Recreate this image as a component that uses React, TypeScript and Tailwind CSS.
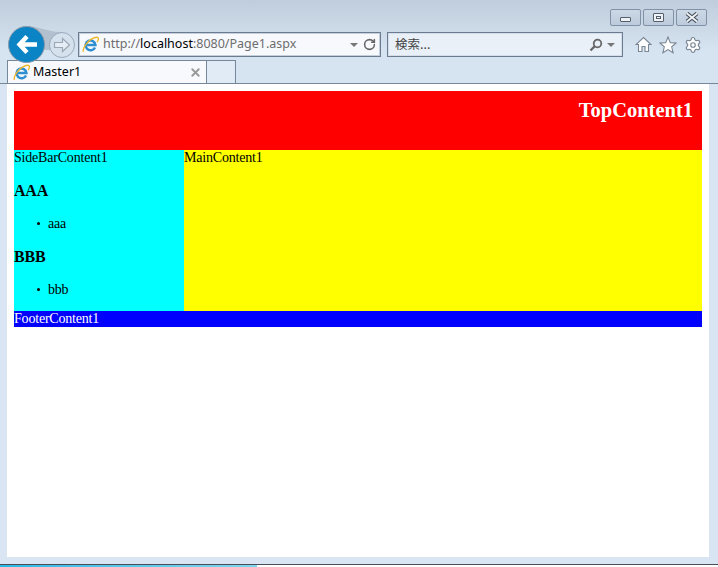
import React from 'react';
import { RotateCw, Settings, X } from 'lucide-react';

function IeLogo({ size = 17 }: { size?: number }) {
  return (
    <svg width={size} height={size} viewBox="0 0 17 17" className="shrink-0">
      <path d="M13 11.4A4.9 4.9 0 1 1 13.4 8.9H4.6" fill="none" stroke="#2f8fd0" strokeWidth="2.5" />
      <path d="M1.6 15.8C-.2 13.6 4.6 6 9 3.4c3-1.8 6-2.6 7-1.6.7.8.2 2.6-.9 4.3" fill="none" stroke="#eeb62a" strokeWidth="1.4" />
    </svg>
  );
}

function WindowButton({ children }: { children: React.ReactNode }) {
  return (
    <div className="w-[31px] h-[17px] flex items-center justify-center rounded-[2px] border border-[#8191a8] bg-gradient-to-b from-[#ccd8e5] to-[#bccbdc]">
      {children}
    </div>
  );
}

function Bullet({ label }: { label: string }) {
  return (
    <li className="flex items-center pl-[23px]">
      <span className="w-[3px] h-[3px] rounded-full bg-black mr-[8px] -mt-[1px]" />
      {label}
    </li>
  );
}

export default function App() {
  return (
    <div className="relative w-[718px] h-[567px] overflow-hidden flex flex-col bg-[#d9e5f2] font-['Noto_Sans',sans-serif]">
      {/* Browser chrome */}
      <div className="h-[84px] flex flex-col bg-gradient-to-b from-[#bfcddc] to-[#d6e4f1] to-60%">
        <div className="h-[32px] flex justify-end gap-[2px] pt-[9px] pr-[11px]">
          <WindowButton>
            <div className="w-[11px] h-[5px] mt-[3px] border border-[#555f6c] bg-[#eef2f6] rounded-[1px]" />
          </WindowButton>
          <WindowButton>
            <div className="w-[11px] h-[9px] flex items-center justify-center border border-[#555f6c] bg-[#eef2f6] rounded-[1px]">
              <div className="w-[5px] h-[3px] border border-[#555f6c]" />
            </div>
          </WindowButton>
          <WindowButton>
            <svg width="14" height="11" viewBox="0 0 14 11">
              <path d="M2 1.5 12 9.5M12 1.5 2 9.5" stroke="#454e5a" strokeWidth="4" />
              <path d="M2 1.5 12 9.5M12 1.5 2 9.5" stroke="#f2f5f8" strokeWidth="1.8" />
            </svg>
          </WindowButton>
        </div>

        <div className="relative z-10 h-[28px] flex items-start pl-[8px]">
          <svg width="54" height="30" viewBox="0 0 54 30" className="absolute left-[19px] -top-[6px]">
            <path d="M6 0C20 0 28 6 42 6L42 24H6z" fill="#a9b7c6" opacity="0.75" />
          </svg>
          <div className="relative w-[37px] h-[37px] -mt-[6px] rounded-full bg-[#0a84c4] border border-[#8a98a8] flex items-center justify-center">
            <svg width="22" height="21" viewBox="0 0 22 21">
              <path d="M11 2.5 3.5 10.5 11 18.5M4 10.5H21" fill="none" stroke="#ffffff" strokeWidth="4.4" />
            </svg>
          </div>
          <div className="relative w-[26px] h-[26px] ml-[4px] rounded-full border border-[#9aa9ba] bg-[#d5e1ed] flex items-center justify-center">
            <svg width="18" height="16" viewBox="0 0 18 16">
              <path d="M9.5 1.5 16.5 8 9.5 14.5V10.5H1.5V5.5H9.5z" fill="#e6edf4" stroke="#9ca8b5" strokeWidth="1.2" />
            </svg>
          </div>
          <div className="w-[303px] h-[25px] ml-[3px] flex items-center border border-[#6b7c90] shadow-[inset_0_0_0_1px_#c5d0dc] bg-[#f7f9fd] pl-[3px] pr-[4px]">
            <IeLogo />
            <div className="ml-[4px] flex-1 text-[12.5px] leading-none text-[#6d6d6d]">
              http://<span className="text-black">localhost</span>:8080/Page1.aspx
            </div>
            <div className="w-0 h-0 mr-[5px] border-x-[4px] border-x-transparent border-t-[4px] border-t-[#777]" />
            <RotateCw size={13} strokeWidth={2.8} className="text-[#666]" />
          </div>
          <div className="w-[236px] h-[25px] ml-[6px] flex items-center border border-[#6b7c90] shadow-[inset_0_0_0_1px_#d3deea] bg-[#e9f0f8] pl-[7px] pr-[7px]">
            <div className="flex-1 text-[12.5px] leading-none text-[#444] font-['Noto_Sans_CJK_JP',sans-serif]">検索...</div>
            <svg width="14" height="14" viewBox="0 0 14 14" className="mr-[4px]">
              <circle cx="8.5" cy="5.5" r="3.8" fill="none" stroke="#666" strokeWidth="1.8" />
              <path d="M5.6 8.4 1.5 12.5" stroke="#666" strokeWidth="2.2" />
            </svg>
            <div className="w-0 h-0 border-x-[4px] border-x-transparent border-t-[4px] border-t-[#777]" />
          </div>
          <div className="ml-[12px] flex items-center gap-[7px] h-[25px]">
            <svg width="17" height="17" viewBox="0 0 17 17">
              <path d="M8.5 1.5 16 8.5H13.5V15.5H10V10.5H7V15.5H3.5V8.5H1z" fill="#ffffff" stroke="#7b8794" strokeWidth="1.1" />
            </svg>
            <svg width="18" height="18" viewBox="0 0 18 18">
              <path d="M9 1 11.3 6.6 17.2 7 12.7 10.8 14.1 16.8 9 13.6 3.9 16.8 5.3 10.8.8 7 6.7 6.6z" fill="#ffffff" stroke="#7b8794" strokeWidth="1.1" />
            </svg>
            <Settings size={18} fill="#ffffff" strokeWidth={1.6} className="text-[#7b8794]" />
          </div>
        </div>

        <div className="h-[24px] flex pl-[7px] border-b border-[#76879a]">
          <div className="w-[200px] flex items-center border border-b-0 border-[#76879a] bg-[#f7f9fd] pl-[5px] pr-[4px]">
            <IeLogo />
            <div className="ml-[3px] flex-1 text-[12.5px] leading-none text-black">Master1</div>
            <X size={13} strokeWidth={3.4} className="text-[#999]" />
          </div>
          <div className="w-[29px] border-t border-r border-[#76879a] bg-[#e0ebf6]" />
        </div>
      </div>

      {/* Page */}
      <div className="ml-[7px] w-[702px] h-[473px] bg-white p-[7px] font-['Liberation_Serif',serif] text-[14px] tracking-[-0.2px] leading-[16px] text-black">
        <div className="h-[59px] bg-[#ff0000] text-right text-white font-bold text-[20.5px] tracking-normal leading-[23px] pt-[8px] pr-[9px]">
          TopContent1
        </div>
        <div className="h-[161px] flex">
          <div className="w-[170px] bg-[#00ffff]">
            <div>SideBarContent1</div>
            <h3 className="mt-[16px] mb-[16px] font-bold text-[16px] leading-[18px]">AAA</h3>
            <ul>
              <Bullet label="aaa" />
            </ul>
            <h3 className="mt-[16px] mb-[16px] font-bold text-[16px] leading-[18px]">BBB</h3>
            <ul>
              <Bullet label="bbb" />
            </ul>
          </div>
          <div className="flex-1 bg-[#ffff00]">MainContent1</div>
        </div>
        <div className="h-[16px] bg-[#0000ff] text-white">FooterContent1</div>
      </div>

      {/* Bottom edge and taskbar sliver */}
      <div className="h-[7px]" />
      <div className="h-[3px] flex border-t border-[#4a4f57]">
        <div className="w-[257px] bg-gradient-to-r from-[#25b9e6] to-[#7fd6ee]" />
        <div className="flex-1 bg-white" />
      </div>
    </div>
  );
}
